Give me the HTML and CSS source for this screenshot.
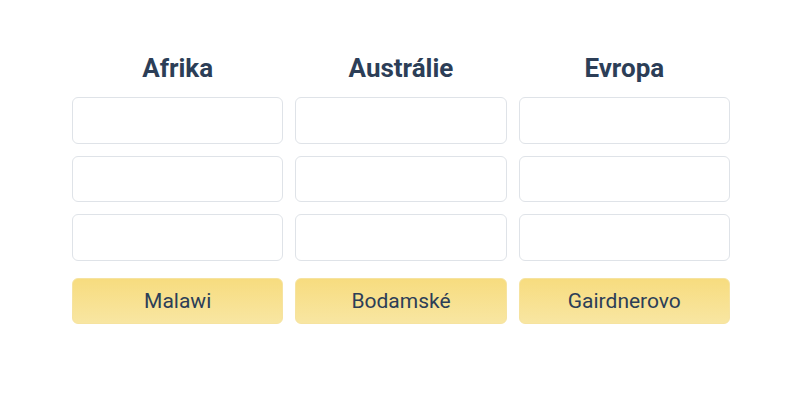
FILE: index.html
```html
<!DOCTYPE html>
<html lang="cs">
<head>
    <meta charset="UTF-8">
    <title>Kontinenty</title>
    <link rel="stylesheet" href="styles.css">
</head>
<body>
    <div class="board">
        <div class="column">
            <h2>Afrika</h2>
            <div class="slot"></div>
            <div class="slot"></div>
            <div class="slot"></div>
            <div class="card">Malawi</div>
        </div>
        <div class="column">
            <h2>Austrálie</h2>
            <div class="slot"></div>
            <div class="slot"></div>
            <div class="slot"></div>
            <div class="card">Bodamské</div>
        </div>
        <div class="column">
            <h2>Evropa</h2>
            <div class="slot"></div>
            <div class="slot"></div>
            <div class="slot"></div>
            <div class="card">Gairdnerovo</div>
        </div>
    </div>
</body>
</html>
```

FILE: styles.css
```css
body {
    font-family: Roboto, "Liberation Sans", sans-serif;
    margin: 0;
    background: #fff;
    color: #2c3e57;
}
.board {
    width: 658px;
    margin: 0 auto;
    padding: 53px 0 0 2px;
    display: grid;
    grid-template-columns: repeat(3, 1fr);
    gap: 12px;
}
.column {
    display: flex;
    flex-direction: column;
    gap: 12px;
}
.column h2 {
    margin: 0 0 1px;
    text-align: center;
    font-size: 26px;
    font-weight: 700;
    line-height: 31px;
    color: #2c3e57;
}
.slot {
    height: 46.5px;
    box-sizing: border-box;
    border: 1px solid #dfe3e8;
    border-radius: 6px;
    background: #fff;
}
.card {
    margin-top: 5.5px;
    height: 46px;
    box-sizing: border-box;
    border: 1px solid #f6e3a0;
    border-radius: 6px;
    background: linear-gradient(to bottom, #f7dc7f, #f8e6a2);
    display: flex;
    align-items: center;
    justify-content: center;
    font-size: 21px;
    color: #2c3e57;
}
```
